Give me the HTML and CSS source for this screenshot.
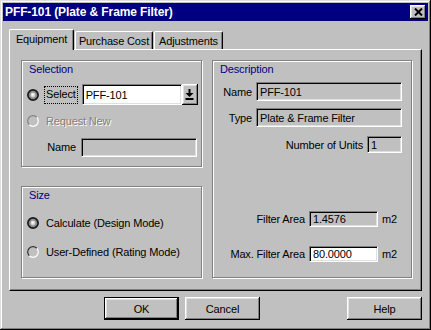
FILE: index.html
```html
<!DOCTYPE html>
<html lang="en">
<head>
  <meta charset="UTF-8">
  <title>PFF-101 (Plate &amp; Frame Filter)</title>
  <link rel="stylesheet" href="styles.css">
</head>
<body>
  <div class="window">
    <div class="titlebar">
      <span class="title">PFF-101 (Plate &amp; Frame Filter)</span>
      <span class="close-btn">
        <svg width="9" height="8" viewBox="0 0 9 8"><path d="M1 0.5 L8 7.5 M8 0.5 L1 7.5" stroke="#000" stroke-width="2" fill="none"/></svg>
      </span>
    </div>

    <div class="content">
      <div class="tabs">
        <div class="tab active tab-equip">Equipment</div>
        <div class="tab tab-cost">Purchase Cost</div>
        <div class="tab tab-adj">Adjustments</div>
      </div>

      <div class="panel">
        <div class="group selection">
          <div class="group-title">Selection</div>
          <div class="row row-select">
            <span class="radio">
              <svg width="12" height="12" viewBox="0 0 12 12"><circle cx="6" cy="6" r="5.1" fill="#8c8c8c" stroke="#1a1a1a" stroke-width="1.7"/><circle cx="6" cy="6" r="2.4" fill="#d8d8d8"/><circle cx="5.6" cy="5.6" r="1.1" fill="#fff"/></svg>
            </span>
            <span class="focus-label">Select</span>
            <div class="combo">
              <div class="field white combo-field">PFF-101</div>
              <div class="drop-btn">
                <svg width="9" height="11" viewBox="0 0 9 11"><rect x="3.5" y="0" width="2" height="4" fill="#000"/><path d="M0.5 4 H8.5 L4.5 8 Z" fill="#000"/><rect x="0.5" y="9" width="8" height="2" fill="#000"/></svg>
              </div>
            </div>
          </div>
          <div class="row row-new">
            <span class="radio">
              <svg width="12" height="12" viewBox="0 0 12 12"><defs><linearGradient id="rd" x1="0" y1="0" x2="1" y2="1"><stop offset="0.48" stop-color="#808080"/><stop offset="0.52" stop-color="#fff"/></linearGradient></defs><circle cx="6" cy="6" r="5.3" fill="#c0c0c0" stroke="url(#rd)" stroke-width="1.2"/></svg>
            </span>
            <span class="label disabled">Request New</span>
          </div>
          <div class="row row-name">
            <span class="label">Name</span>
            <div class="field name-field"></div>
          </div>
        </div>

        <div class="group description">
          <div class="group-title">Description</div>
          <div class="drow drow-name">
            <span class="label">Name</span>
            <div class="field wide-field">PFF-101</div>
          </div>
          <div class="drow drow-type">
            <span class="label">Type</span>
            <div class="field wide-field">Plate &amp; Frame Filter</div>
          </div>
          <div class="drow drow-units">
            <span class="label">Number of Units</span>
            <div class="field units-field">1</div>
          </div>
          <div class="drow drow-area">
            <span class="label">Filter Area</span>
            <div class="field area-field">1.4576</div>
            <span class="unit">m2</span>
          </div>
          <div class="drow drow-max">
            <span class="label">Max. Filter Area</span>
            <div class="field white area-field">80.0000</div>
            <span class="unit">m2</span>
          </div>
        </div>

        <div class="group size">
          <div class="group-title">Size</div>
          <div class="row row-calc">
            <span class="radio">
              <svg width="12" height="12" viewBox="0 0 12 12"><circle cx="6" cy="6" r="5.1" fill="#8c8c8c" stroke="#1a1a1a" stroke-width="1.7"/><circle cx="6" cy="6" r="2.4" fill="#d8d8d8"/><circle cx="5.6" cy="5.6" r="1.1" fill="#fff"/></svg>
            </span>
            <span class="label">Calculate (Design Mode)</span>
          </div>
          <div class="row row-user">
            <span class="radio">
              <svg width="12" height="12" viewBox="0 0 12 12"><defs><linearGradient id="ru" x1="0" y1="0" x2="1" y2="1"><stop offset="0.48" stop-color="#303030"/><stop offset="0.52" stop-color="#fff"/></linearGradient></defs><circle cx="6" cy="6" r="5.3" fill="#c0c0c0" stroke="url(#ru)" stroke-width="1.2"/></svg>
            </span>
            <span class="label">User-Defined (Rating Mode)</span>
          </div>
        </div>
      </div>

      <div class="buttons">
        <div class="btn ok">OK</div>
        <div class="btn cancel">Cancel</div>
        <div class="btn help">Help</div>
      </div>
    </div>
  </div>
</body>
</html>
```

FILE: styles.css
```css
body {
  margin: 0;
  background: #c0c0c0;
  font-family: "Liberation Sans", Arial, sans-serif;
  font-size: 11px;
  letter-spacing: -0.15px;
  color: #000;
}
.window {
  width: 431px;
  height: 330px;
  box-sizing: border-box;
  padding: 3px;
  background: #c0c0c0;
  box-shadow: inset -1px -1px #000, inset 1px 1px #dfdfdf, inset -2px -2px #808080, inset 2px 2px #fff;
}
.titlebar {
  height: 18px;
  background: #000080;
  color: #fff;
  display: flex;
  align-items: center;
  padding: 0 2px;
  font-weight: bold;
  font-size: 12px;
  letter-spacing: -0.1px;
}
.close-btn {
  margin-left: auto;
  width: 16px;
  height: 14px;
  box-sizing: border-box;
  background: #c0c0c0;
  display: flex;
  align-items: center;
  justify-content: center;
  box-shadow: inset -1px -1px #000, inset 1px 1px #fff, inset -2px -2px #808080, inset 2px 2px #dfdfdf;
}
.content {
  padding: 8px 6px 0 6px;
}
.tabs {
  display: flex;
  align-items: flex-end;
  height: 20px;
  position: relative;
  z-index: 1;
}
.tab {
  height: 18px;
  box-sizing: border-box;
  border-top: 1px solid #fff;
  border-left: 1px solid #fff;
  border-right: 1px solid #000;
  border-radius: 2px 2px 0 0;
  box-shadow: inset -1px 0 #808080;
  background: #c0c0c0;
  display: flex;
  align-items: center;
  justify-content: center;
  margin-right: 1px;
  padding-top: 1px;
}
.tab.active {
  height: 21px;
  margin-bottom: -1px;
  padding-top: 0;
  padding-bottom: 2px;
}
.tab-equip { width: 65px; }
.tab-cost { width: 78px; }
.tab-adj { width: 69px; }
.panel {
  height: 242px;
  box-sizing: border-box;
  border-top: 1px solid #fff;
  border-left: 1px solid #fff;
  border-right: 1px solid #000;
  border-bottom: 1px solid #000;
  box-shadow: inset -1px -1px #808080;
  padding: 10px 0 0 11px;
  display: grid;
  grid-template-columns: 181px 200px;
  grid-template-rows: 107px 92px;
  column-gap: 10px;
  row-gap: 19px;
}
.group {
  box-sizing: border-box;
  border: 1px solid #808080;
  box-shadow: 1px 1px 0 #fff, inset 1px 1px 0 #fff;
  padding: 2px 3px 0 5px;
}
.description {
  grid-column: 2;
  grid-row: 1 / 3;
  padding-right: 9px;
}
.size {
  grid-column: 1;
  grid-row: 2;
}
.group-title {
  color: #000080;
  line-height: 13px;
  padding-left: 2px;
}
.row {
  display: flex;
  align-items: center;
  height: 20px;
}
.row-select { margin-top: 8px; height: 21px; }
.row-new { margin-top: 6px; }
.row-name { margin-top: 6px; justify-content: flex-end; gap: 5px; padding-right: 1px; }
.row-calc { margin-top: 11px; }
.row-user { margin-top: 9px; }
.radio {
  width: 12px;
  height: 12px;
  display: flex;
}
.focus-label {
  margin-left: 5px;
  border: 1px dotted #000;
  padding: 1px 1px 2px 1px;
  line-height: 13px;
}
.row-calc .label, .row-user .label, .row-new .label {
  margin-left: 7px;
}
.disabled {
  color: #808080;
  text-shadow: 1px 1px 0 #fff;
}
.combo {
  display: flex;
  margin-left: 4px;
}
.field {
  box-sizing: border-box;
  border-top: 1px solid #808080;
  border-left: 1px solid #808080;
  border-bottom: 1px solid #fff;
  border-right: 1px solid #fff;
  box-shadow: inset 1px 1px #000, inset -1px -1px #dfdfdf;
  background: #c0c0c0;
  padding: 0 3px;
  display: flex;
  align-items: center;
  white-space: nowrap;
}
.field.white {
  background: #fff;
}
.combo-field {
  width: 100px;
  height: 21px;
}
.drop-btn {
  width: 16px;
  height: 21px;
  box-sizing: border-box;
  display: flex;
  align-items: center;
  justify-content: center;
  box-shadow: inset -1px -1px #000, inset 1px 1px #fff, inset -2px -2px #808080, inset 2px 2px #dfdfdf;
}
.name-field {
  width: 116px;
  height: 19px;
}
.drow {
  display: flex;
  align-items: center;
  justify-content: flex-end;
  gap: 4px;
}
.drow-name { margin-top: 6px; }
.drow-type { margin-top: 7px; }
.drow-units { margin-top: 9px; }
.drow-area { margin-top: 58px; }
.drow-max { margin-top: 19px; }
.wide-field {
  width: 146px;
  height: 19px;
}
.units-field {
  width: 35px;
  height: 17px;
}
.area-field {
  width: 69px;
  height: 16px;
}
.unit {
  width: 20px;
}
.buttons {
  display: flex;
  margin-top: 6px;
}
.btn {
  width: 75px;
  height: 23px;
  box-sizing: border-box;
  display: flex;
  align-items: center;
  justify-content: center;
  box-shadow: inset -1px -1px #000, inset 1px 1px #fff, inset -2px -2px #808080, inset 2px 2px #dfdfdf;
}
.btn.ok {
  margin-left: 95px;
  border: 1px solid #000;
}
.btn.cancel {
  margin-left: 6px;
}
.btn.help {
  margin-left: auto;
}
```
